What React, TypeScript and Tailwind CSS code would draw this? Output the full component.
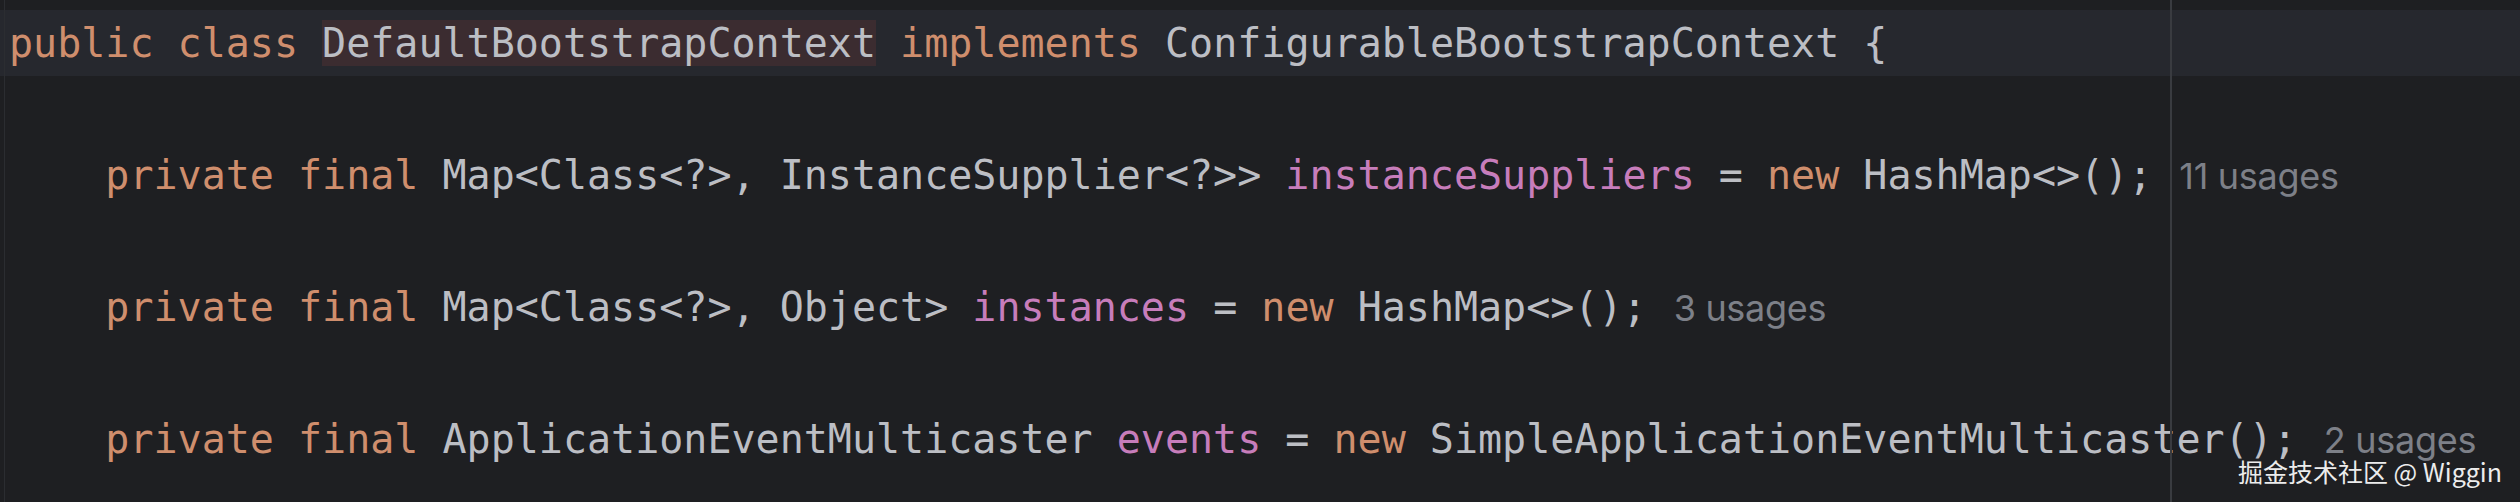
// editor snippet, dark theme
type Kind = "kw" | "txt" | "field" | "hl";
type Token = [string, Kind];

type CodeLine = {
  tokens: Token[];
  usages?: string;
  current?: boolean;
};

const colorFor: Record<Kind, string> = {
  kw: "text-[#cf8e6d]",
  txt: "text-[#bcbec4]",
  field: "text-[#c77dbb]",
  hl: "text-[#bcbec4] bg-[#3b2c30]",
};

const lines: CodeLine[] = [
  {
    current: true,
    tokens: [
      ["public class ", "kw"],
      ["DefaultBootstrapContext", "hl"],
      [" ", "txt"],
      ["implements", "kw"],
      [" ConfigurableBootstrapContext {", "txt"],
    ],
  },
  { tokens: [] },
  {
    tokens: [
      ["    private final ", "kw"],
      ["Map<Class<?>, InstanceSupplier<?>> ", "txt"],
      ["instanceSuppliers", "field"],
      [" = ", "txt"],
      ["new", "kw"],
      [" HashMap<>();", "txt"],
    ],
    usages: "11 usages",
  },
  { tokens: [] },
  {
    tokens: [
      ["    private final ", "kw"],
      ["Map<Class<?>, Object> ", "txt"],
      ["instances", "field"],
      [" = ", "txt"],
      ["new", "kw"],
      [" HashMap<>();", "txt"],
    ],
    usages: "3 usages",
  },
  { tokens: [] },
  {
    tokens: [
      ["    private final ", "kw"],
      ["ApplicationEventMulticaster ", "txt"],
      ["events", "field"],
      [" = ", "txt"],
      ["new", "kw"],
      [" SimpleApplicationEventMulticaster();", "txt"],
    ],
    usages: "2 usages",
  },
  { tokens: [] },
];

const Line = ({ line }: { line: CodeLine }) => {
  return (
    <div className={`h-[66px] flex items-baseline whitespace-pre pl-[9px] leading-[66px] ${line.current ? "bg-[#26282e]" : ""}`}>
      <span className="font-['DejaVu_Sans_Mono',monospace] text-[40px]">
        {line.tokens.map(([text, kind], i) => (
          <span key={i} className={colorFor[kind]}>
            {text}
          </span>
        ))}
      </span>
      {line.usages && (
        <span className="ml-[27px] font-['Inter',sans-serif] text-[36px] tracking-[-0.3px] text-[#7d8088]">
          {line.usages}
        </span>
      )}
    </div>
  );
};

export default function App() {
  return (
    <div className="relative w-[2520px] h-[502px] overflow-hidden bg-[#1e1f22]">
      <div className="pt-[10px] flex flex-col">
        {lines.map((line, idx) => (
          <Line key={idx} line={line} />
        ))}
      </div>

      {/* gutter edge + right margin guide */}
      <div className="absolute top-0 bottom-0 left-[4px] w-px bg-[#2b2d31]" />
      <div className="absolute top-0 bottom-0 left-[2170px] w-[2px] bg-[#393b40]" />

      {/* watermark */}
      <div className="absolute right-[18px] bottom-[18px] text-[25px] leading-none text-[#ececec] font-['Noto_Sans_CJK_SC','Noto_Sans',sans-serif]">
        掘金技术社区 @ Wiggin
      </div>
    </div>
  );
}
